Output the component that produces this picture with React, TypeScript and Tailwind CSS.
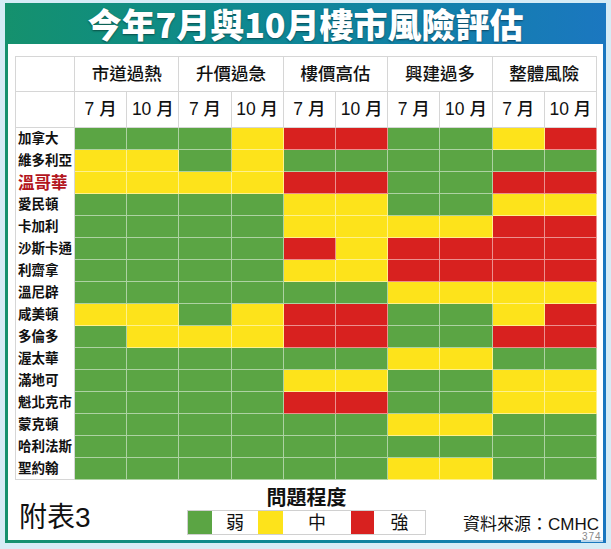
const font = '[font-family:"Liberation_Sans","Noto_Sans_CJK_TC",sans-serif]'

const COLORS: Record<string, string> = {
  g: 'bg-[#5ba544]',
  y: 'bg-[#fde31b]',
  r: 'bg-[#d8211f]',
}

const groups = ['市道過熱', '升價過急', '樓價高估', '興建過多', '整體風險']

// 10 cells per city: 7月/10月 for each group
const rows: [string, string][] = [
  ['加拿大', 'gggyrrggyr'],
  ['維多利亞', 'yygygggggg'],
  ['溫哥華', 'yyyyrrggrr'],
  ['愛民頓', 'ggggyyggyy'],
  ['卡加利', 'ggggyyyyrr'],
  ['沙斯卡通', 'ggggryrrrr'],
  ['利齋拿', 'ggggyyrrrr'],
  ['溫尼辟', 'ggggggyyyy'],
  ['咸美頓', 'yygyrrggyr'],
  ['多倫多', 'gyyyrrggrr'],
  ['渥太華', 'ggggggyygg'],
  ['滿地可', 'ggggyyggyy'],
  ['魁北克市', 'ggggrrggyy'],
  ['蒙克頓', 'ggggggyygg'],
  ['哈利法斯', 'gggggggggg'],
  ['聖約翰', 'ggggggyygg'],
]

function RiskTable() {
  return (
    <div className="grid w-[582px] grid-cols-[59px_repeat(10,minmax(0,1fr))] border-l border-t border-[#d6d6d6]">
      {/* group headings */}
      <div className="h-[35px] border-b border-r border-[#d6d6d6]" />
      {groups.map((g) => (
        <div
          key={g}
          className="col-span-2 flex h-[35px] items-center justify-center border-b border-r border-[#d6d6d6] text-[17.5px] font-medium text-[#111]"
        >
          {g}
        </div>
      ))}

      {/* month headings */}
      <div className="h-[36px] border-b border-r border-[#d6d6d6]" />
      {groups.map((g) =>
        ['7 月', '10 月'].map((m) => (
          <div
            key={g + m}
            className="flex h-[36px] items-center justify-center border-b border-r border-[#d6d6d6] text-[17.5px] font-medium text-[#111]"
          >
            {m}
          </div>
        ))
      )}

      {rows.map(([city, cells], i) => (
        <div key={city} className="contents">
          <div
            className={
              'flex h-[22px] items-center border-r border-[#d6d6d6] pl-[2px] font-bold leading-none ' +
              (i === rows.length - 1 ? 'border-b ' : '') +
              (city === '溫哥華' ? 'text-[16.5px] text-[#b3151d]' : 'text-[13.5px] text-[#111]')
            }
          >
            {city}
          </div>
          {cells.split('').map((c, j) => (
            <div key={j} className={'h-[22px] border-b border-r border-white/50 ' + COLORS[c]} />
          ))}
        </div>
      ))}
    </div>
  )
}

function Legend() {
  return (
    <div className="flex w-[239px] flex-col items-center">
      <div className="h-[24px] text-[20px] font-bold leading-[24px] text-[#111]">問題程度</div>
      <div className="flex h-[25px] w-[239px] border border-[#d0d0d0] text-[18px] leading-none text-[#111]">
        <div className="w-[24px] bg-[#5ba544]" />
        <div className="flex w-[46px] items-center justify-center">弱</div>
        <div className="w-[25px] bg-[#fde31b]" />
        <div className="flex w-[68px] items-center justify-center">中</div>
        <div className="w-[23px] bg-[#d8211f]" />
        <div className="flex flex-1 items-center justify-center">強</div>
      </div>
    </div>
  )
}

export default function App() {
  return (
    <div className={'relative h-[549px] w-[611px] overflow-hidden bg-[#d6ecf6] pl-[5px] pt-[3px] ' + font}>
      <div className="flex h-[540px] w-[601px] flex-col bg-linear-to-r from-[#15916d] to-[#1b77c0]">
        <div className="flex h-[41px] items-center justify-center">
          <h1 className="text-[34px] font-black leading-[40px] text-white [font-family:'Noto_Sans_CJK_TC',sans-serif] [text-shadow:0_1px_2px_rgba(0,0,0,0.45)]">
            今年7月與10月樓市風險評估
          </h1>
        </div>

        <div className="mx-[3px] mb-[3px] flex flex-1 flex-col bg-white pl-[7px] pt-[12px]">
          <RiskTable />

          <div className="mt-[6px] flex items-end">
            <div className="w-[172px] pb-[3px] pl-[4px] text-[28px] leading-none text-[#111]">附表3</div>
            <Legend />
            <div className="ml-[37px] pb-[2px] text-[17px] leading-none text-[#111]">資料來源：CMHC</div>
          </div>
        </div>
      </div>

      {/* page number watermark */}
      <div className="absolute left-[581px] top-[532px] bg-white/70 px-px text-[10px] leading-none tracking-[1px] text-[#888]">
        374
      </div>
    </div>
  )
}
